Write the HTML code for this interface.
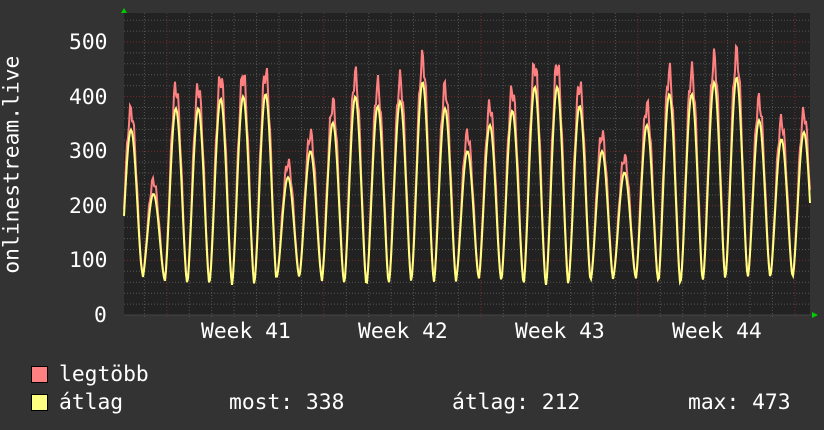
<!DOCTYPE html>
<html><head><meta charset="utf-8"><style>
html,body{margin:0;padding:0;background:#333;}
body{width:824px;height:430px;overflow:hidden;position:relative;font-family:"DejaVu Sans Mono","Liberation Mono",monospace;color:#fff;}
.t{position:absolute;font-size:21.3px;white-space:pre;line-height:1;}
.sq{position:absolute;width:15px;height:15px;border:1px solid #000;}
</style></head><body>
<svg id="g" width="824" height="430" style="position:absolute;left:0;top:0"></svg>
<div class="t" style="left:69px;top:32px">500</div>
<div class="t" style="left:69px;top:87px">400</div>
<div class="t" style="left:69px;top:141px">300</div>
<div class="t" style="left:69px;top:196px">200</div>
<div class="t" style="left:69px;top:250px">100</div>
<div class="t" style="left:94px;top:305px">0</div>
<div class="t" style="left:-98px;top:154px;transform:rotate(-90deg);width:220px;text-align:center">onlinestream.live</div>
<div class="t" style="left:201px;top:321px">Week 41</div>
<div class="t" style="left:358px;top:321px">Week 42</div>
<div class="t" style="left:515px;top:321px">Week 43</div>
<div class="t" style="left:672px;top:321px">Week 44</div>
<div class="sq" style="left:31px;top:366px;background:#ff8080"></div>
<div class="sq" style="left:31px;top:394px;background:#ffff80"></div>
<div class="t" style="left:59px;top:364px">legtöbb</div>
<div class="t" style="left:59px;top:392px">átlag</div>
<div class="t" style="left:229px;top:392px">most: 338</div>
<div class="t" style="left:452px;top:392px">átlag: 212</div>
<div class="t" style="left:688px;top:392px">max: 473</div>
<script>
var s='',L=124,R=810,T=13,B=315,k=0.546;
s+='<rect x="'+L+'" y="'+T+'" width="'+(R-L)+'" height="'+(B-T)+'" fill="#222"/>';
for(var v=20;v<=540;v+=20){var y=B-v*k;if(y<T)break;var maj=v%100==0;
s+='<line x1="'+L+'" x2="'+R+'" y1="'+y.toFixed(1)+'" y2="'+y.toFixed(1)+'" stroke="'+(maj?'#7a2a2a':'#555')+'" stroke-dasharray="1,2" stroke-width="1"/>';}
for(var x=144.4;x<R;x+=22.43){var maj=Math.abs(((x-166.4)/157)-Math.round((x-166.4)/157))<0.02;
s+='<line y1="'+T+'" y2="'+(B+3)+'" x1="'+x.toFixed(1)+'" x2="'+x.toFixed(1)+'" stroke="'+(maj?'#7a2a2a':'#555')+'" stroke-dasharray="1,2"/>';}
var pk=[390,255,435,435,455,460,465,290,345,405,460,440,450,490,435,345,400,430,480,480,440,345,300,400,465,465,490,500,410,370,385,385];
var mn=[80,65,60,55,60,55,60,70,70,60,55,55,60,65,60,70,65,60,55,55,60,65,70,65,55,60,65,70,70,70,70];
var r='',yl='';
for(var x=L;x<=R;x+=1){var p=(x-131)/22.43+0.5;var i=Math.floor(p),f=p-i;if(i<0){i=0;}
var P=pk[Math.min(i,pk.length-1)],M=mn[Math.min(i,mn.length-1)];
var sh=Math.pow(Math.sin(Math.PI*f),1.6);
var vr=M+(P-M)*sh*(0.95+0.05*Math.sin(x*1.7));
var vy=M+(P*0.87-M)*sh;
r+=x+','+(B-vr*k).toFixed(1)+' ';yl+=x+','+(B-vy*k).toFixed(1)+' ';}
s+='<polyline points="'+r+'" fill="none" stroke="#ff8080" stroke-width="2"/>';
s+='<polyline points="'+yl+'" fill="none" stroke="#ffff80" stroke-width="2"/>';
s+='<line x1="'+L+'" x2="'+(R+2)+'" y1="'+B+'" y2="'+B+'" stroke="#444"/>';
s+='<polygon points="121,13 127,13 124,8" fill="#0c0"/>';
s+='<polygon points="812,312 812,318 818,315" fill="#0c0"/>';
document.getElementById('g').innerHTML=s;
</script>
</body></html>
